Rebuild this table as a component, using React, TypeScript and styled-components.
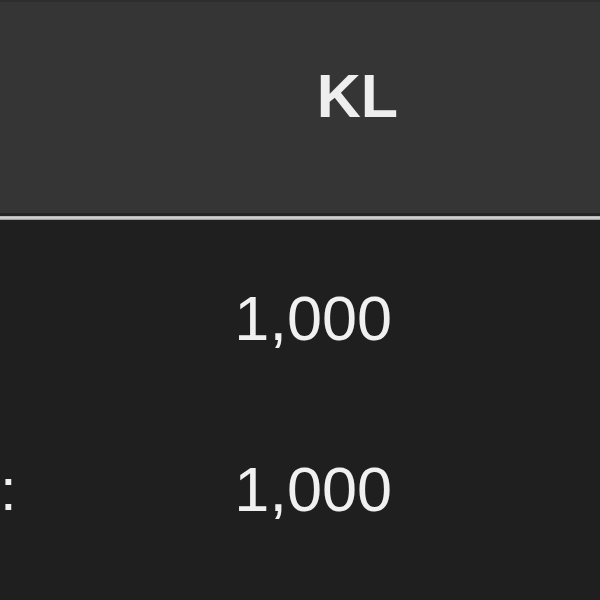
import styled, { createGlobalStyle } from "styled-components"

type Row = {
  label: string
  value: string
}

const rows: Row[] = [
  { label: "", value: "1,000" },
  { label: ":", value: "1,000" },
]

const GlobalStyle = createGlobalStyle`
  html, body {
    margin: 0;
    padding: 0;
    background: #1f1f1f;
  }

  body {
    font-family: "Liberation Sans", Arial, Helvetica, sans-serif;
    color: #f0f0f0;
    -webkit-font-smoothing: antialiased;
  }
`

export default function App() {
  return (
    <>
      <GlobalStyle />
      <Table>
        <HeaderRow>
          <LabelCell />
          <HeaderCell>KL</HeaderCell>
        </HeaderRow>
        <Divider />

        <Body>
          {rows.map((row, i) => (
            <BodyRow key={i}>
              <LabelCell>{row.label}</LabelCell>
              <ValueCell>{row.value}</ValueCell>
            </BodyRow>
          ))}
        </Body>
      </Table>
    </>
  )
}

const Table = styled.div`
  width: 600px;
  height: 600px;
  overflow: hidden;
  background: #1f1f1f;
  display: flex;
  flex-direction: column;
`

const HeaderRow = styled.div`
  display: grid;
  grid-template-columns: 12px 1fr;
  height: 216px;
  flex-shrink: 0;
  box-sizing: border-box;
  background: #353535;
  border-top: 2px solid #2e2e2e;
  border-bottom: 3px solid #262626;
`

const Divider = styled.div`
  height: 4px;
  flex-shrink: 0;
  background: linear-gradient(#a8a8a8, #d4d4d4 40%, #c4c4c4 70%, #8a8a8a);
`

const HeaderCell = styled.div`
  padding: 64px 202px 0 0;
  text-align: right;
  font-size: 61px;
  font-weight: 700;
  line-height: 1;
  color: #eeeeee;
`

const Body = styled.div`
  display: flex;
  flex-direction: column;
  padding-top: 13px;
`

const BodyRow = styled.div`
  display: grid;
  grid-template-columns: 12px 1fr;
  height: 171px;
  align-items: center;
`

const LabelCell = styled.div`
  white-space: nowrap;
  font-size: 60px;
  line-height: 1;
  color: #f0f0f0;
`

const ValueCell = styled.div`
  padding-right: 208px;
  text-align: right;
  font-size: 63px;
  line-height: 1;
  font-weight: 400;
  color: #f0f0f0;
`
